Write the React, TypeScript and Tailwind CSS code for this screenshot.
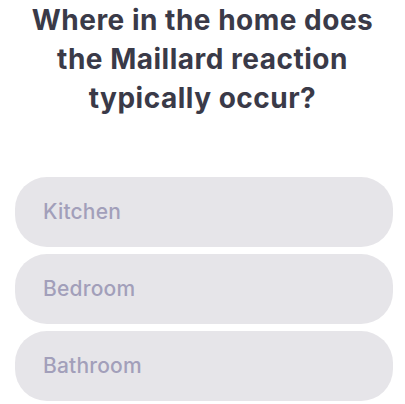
const options = ["Kitchen", "Bedroom", "Bathroom"]

export default function App() {
  return (
    <div
      className="flex h-[404px] w-[405px] flex-col bg-white"
      style={{ fontFamily: "Inter, 'Noto Sans', sans-serif" }}
    >
      {/* Question */}
      <h1 className="mt-[1px] text-center text-[28px] font-bold leading-[39px] tracking-[0.5px] text-[#3a3a48]">
        Where in the home does
        <br />
        the Maillard reaction
        <br />
        typically occur?
      </h1>

      {/* Answers */}
      <div className="ml-[15px] mt-[59px] flex w-[378px] flex-col gap-[7px]">
        {options.map((opt) => (
          <button
            key={opt}
            type="button"
            className="flex h-[70px] items-center rounded-[32px] bg-[#e6e5e9] pl-[28px] text-left text-[21px] font-medium tracking-[0.2px] text-[#a29fba]"
          >
            {opt}
          </button>
        ))}
      </div>
    </div>
  )
}
